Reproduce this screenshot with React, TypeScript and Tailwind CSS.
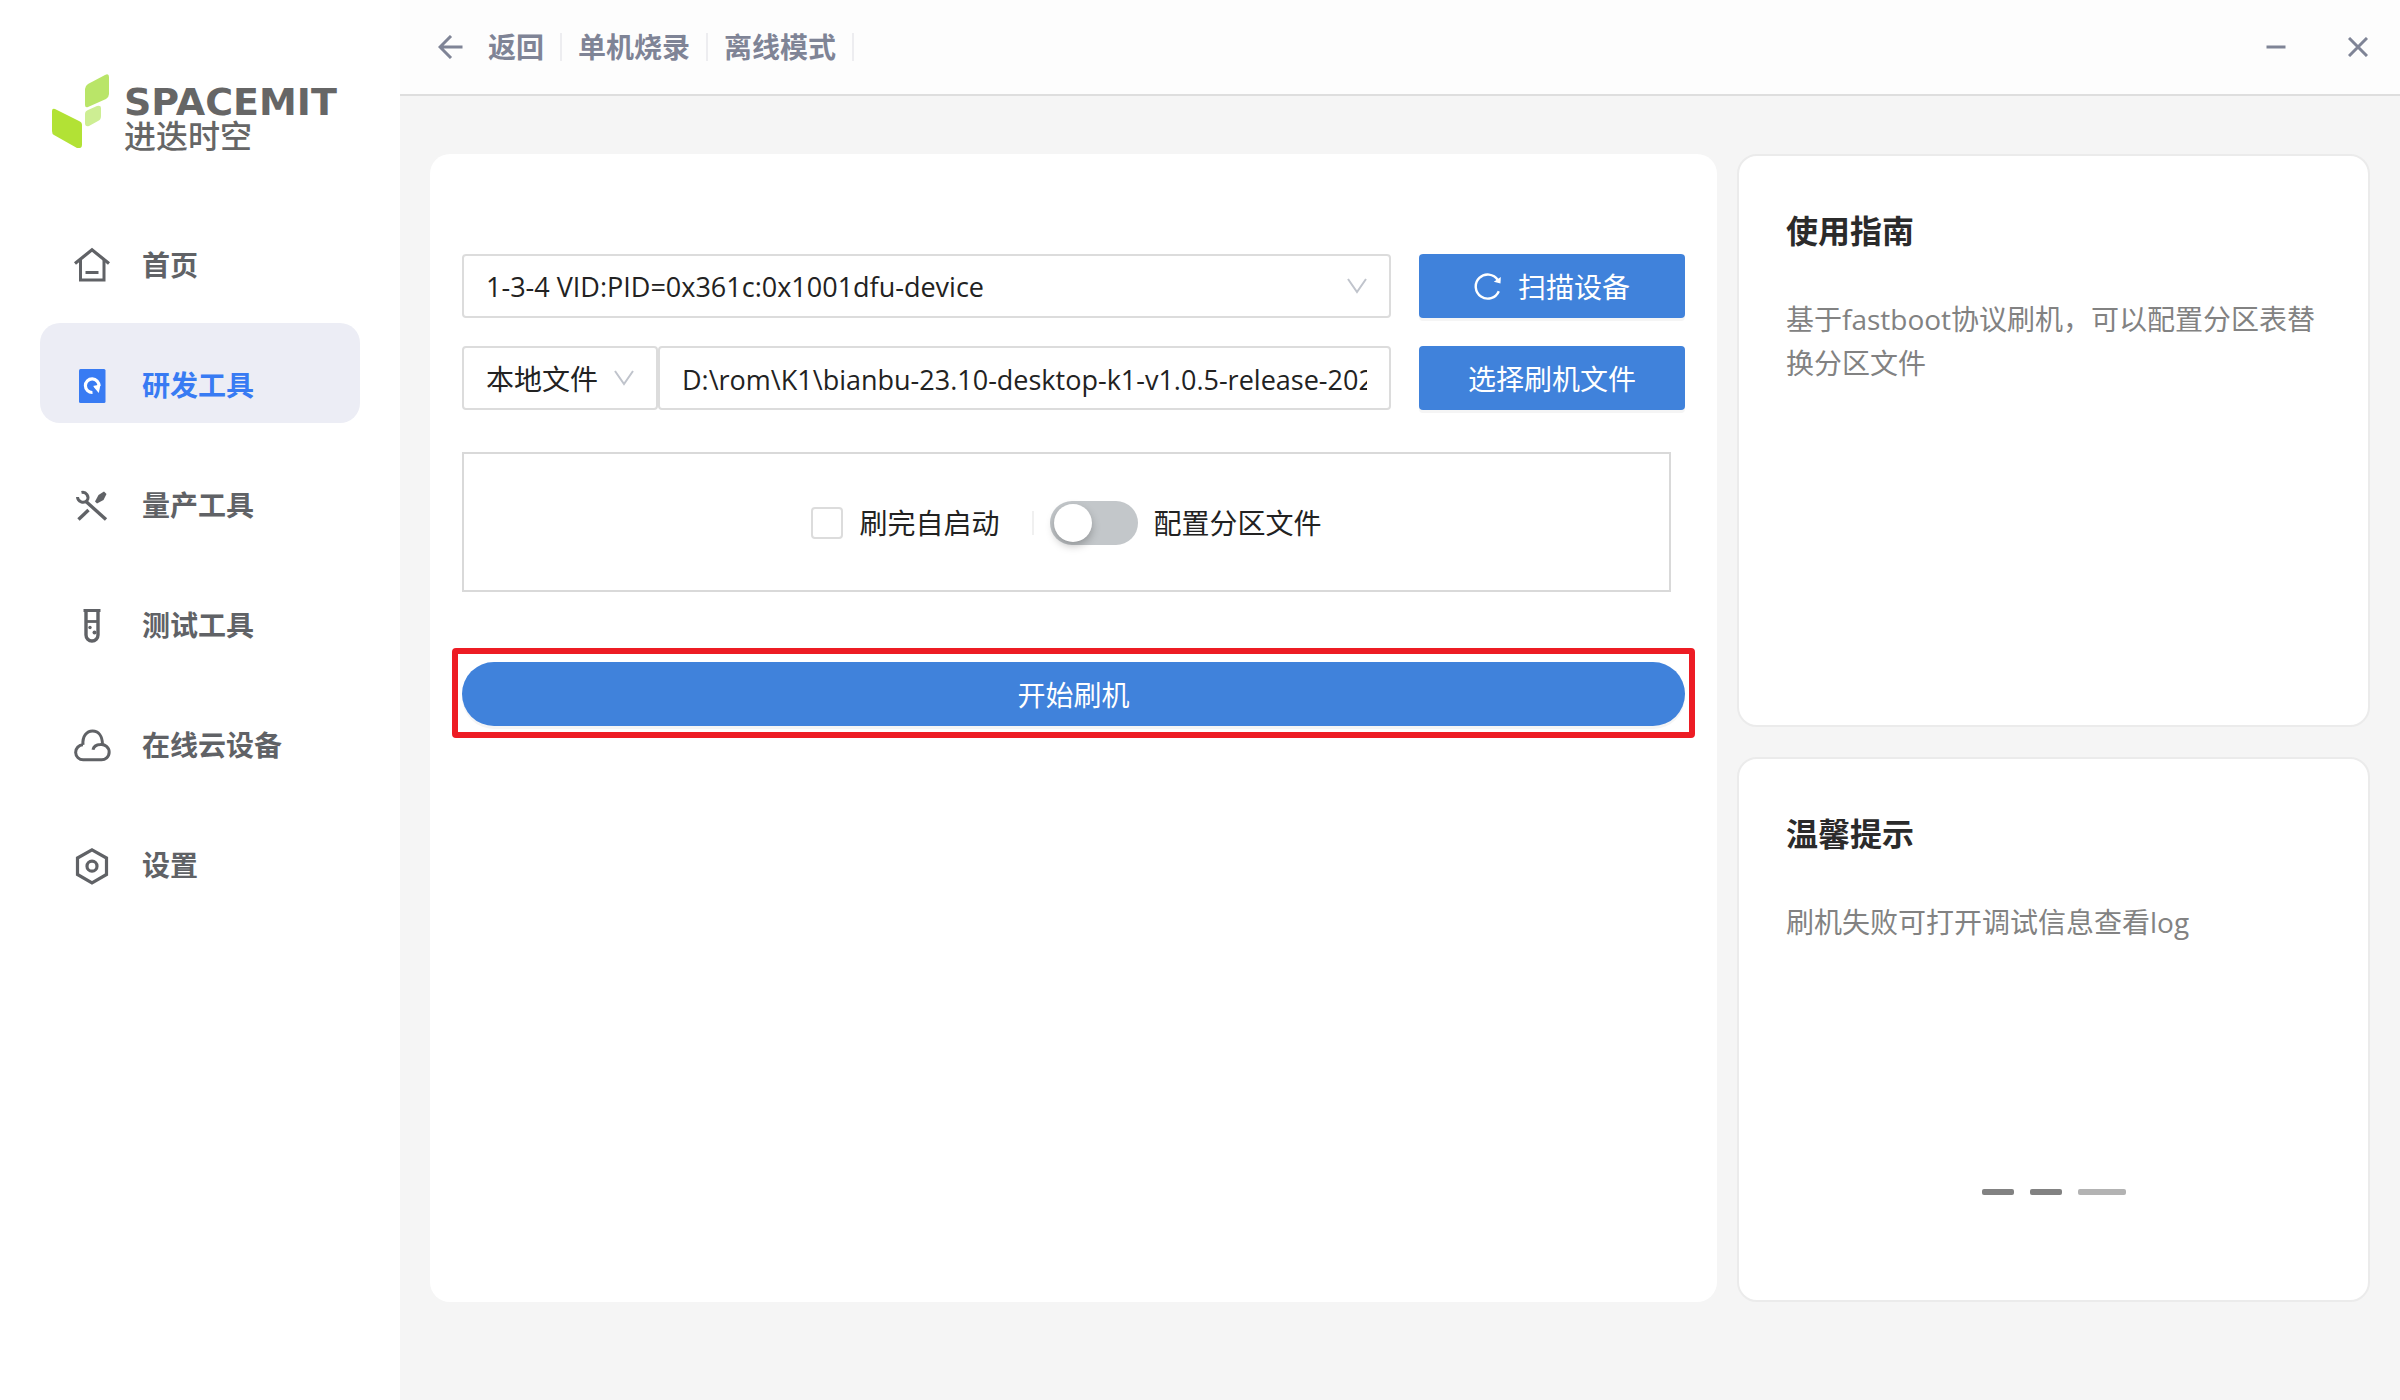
import { useState, type ReactNode } from 'react';

const Icon = ({ children }: { children: ReactNode }) => (
    <svg viewBox="0 0 40 40" className="size-10 shrink-0" fill="none" stroke="currentColor" strokeWidth="3" aria-hidden="true">
        {children}
    </svg>
);

const HomeIcon = () => (
    <Icon>
        <path d="M3 18.500 20 4.800 37 18.500" strokeWidth="3.200" />
        <path d="M8.500 15v20h23.500V15" />
        <path d="M13.500 27.500h13" />
    </Icon>
);

const DeviceIcon = () => (
    <Icon>
        <rect x="7" y="4" width="26.500" height="34" rx="1.500" fill="currentColor" stroke="none" />
        <path d="M20.500 27.500a6.800 6.800 0 1 1 6.500-6.500" stroke="#fff" strokeWidth="3.200" />
        <path d="m20.800 21 7.700-1.500-1.700 8.500z" fill="#fff" stroke="none" />
        <path d="m19.800 20.500 3.400 8.500" strokeWidth="2.200" />
    </Icon>
);

const ToolsIcon = () => (
    <Icon>
        <path d="m14 16.500 20 18" strokeWidth="3.400" />
        <path d="M9.500 7.500a5.200 5.200 0 0 1 5.500 8 5.500 5.500 0 0 1-9.500-3.500" strokeWidth="3" />
        <path d="m6.500 34.500 10-9.500" strokeWidth="3.400" />
        <path d="m23 16.500 3.500-6.500 5.500-3.500 2.500 2.500-3 6-6.500 3.500z" fill="currentColor" stroke="none" />
    </Icon>
);

const TubeIcon = () => (
    <Icon>
        <path d="M11.500 5.500h17" />
        <path d="M14 6v24a6 6 0 0 0 12 0V6" strokeWidth="3.400" />
        <path d="M14 16.500h12" strokeWidth="2.800" />
        <circle cx="18" cy="22.500" r="1.700" fill="currentColor" stroke="none" />
        <circle cx="22.500" cy="27.500" r="2" fill="currentColor" stroke="none" />
    </Icon>
);

const CloudIcon = () => (
    <Icon>
        <path d="M11 19.800a7.500 7.500 0 0 0 .3 15h17.400a7.700 7.700 0 1 0-.2-15.300c-4.500.2-7 2.500-7.500 5.300" />
        <path d="M11 19.800c-.8-8.500 3.800-13.800 9.500-13.800 6 0 9.900 5 10 13.500" />
    </Icon>
);

const SettingIcon = () => (
    <Icon>
        <path d="m20 4.800 14.500 8.200v16.500L20 37.800 5.500 29.500V13z" strokeWidth="3.200" />
        <circle cx="20" cy="21.200" r="5" strokeWidth="3.200" />
    </Icon>
);

const Chevron = () => (
    <svg viewBox="0 0 20 16" className="pointer-events-none absolute right-6 top-6 h-4 w-5" fill="none" stroke="#c0c4cc" strokeWidth="2" aria-hidden="true">
        <path d="m1 1 9 13 9-13" />
    </svg>
);

const navItems = [
    { label: '首页', icon: <HomeIcon /> },
    { label: '研发工具', icon: <DeviceIcon /> },
    { label: '量产工具', icon: <ToolsIcon /> },
    { label: '测试工具', icon: <TubeIcon /> },
    { label: '在线云设备', icon: <CloudIcon /> },
    { label: '设置', icon: <SettingIcon /> },
];

const crumbs = ['单机烧录', '离线模式'];

const Sidebar = () => {
    const [active, setActive] = useState('研发工具');

    return (
        <aside className="w-[400px] shrink-0 bg-white px-10 pt-[74px]">
            <div className="flex h-[74px] gap-3.5 pl-3">
                <svg viewBox="0 0 58 74" className="h-[74px] w-[58px] shrink-0" aria-hidden="true">
                    <path d="M3 35q-3-1-3 2v20q0 3 2 4l23 13q5 1 5-3V51q0-3-3-4z" fill="#b2e235" />
                    <path d="M33 15q0-3 3-5L53 1q4-2 4 2v17q0 3-3 5L36 33q-3 1-3-2z" fill="#b9e568" />
                    <path d="M33 40q0-3 3-4l9-4q4-1 4 2v8q0 4-3 5l-9 5q-4 1-4-3z" fill="#cdee93" />
                </svg>
                <div className="text-[#666666]">
                    <p className="mt-2 font-['DejaVu_Sans',sans-serif] text-[38px] font-bold leading-10">SPACEMIT</p>
                    <p className="text-[32px] font-medium leading-7">进迭时空</p>
                </div>
            </div>
            <nav className="mt-[55px] flex flex-col gap-5">
                {navItems.map((item) => (
                    <button
                        key={item.label}
                        onClick={() => setActive(item.label)}
                        className={`flex h-[100px] items-center gap-[30px] rounded-[20px] pl-8 pt-6 text-[28px] font-bold ${active === item.label ? 'bg-[#ecedf5] text-[#387bf3]' : 'text-[#606266]'
                            }`}
                    >
                        {item.icon}
                        {item.label}
                    </button>
                ))}
            </nav>
        </aside>
    );
};

const Header = () => (
    <header className="flex h-24 items-center border-b-2 border-[#dedede] bg-[#fdfdfd] pl-[38px] pr-8 text-[28px] font-bold text-[#7f8496]">
        <button className="flex items-center gap-6">
            <svg viewBox="0 0 26 24" className="h-6 w-[26px]" fill="none" stroke="currentColor" strokeWidth="3" aria-hidden="true">
                <path d="M13 1 2 12l11 11M2 12h22.500" />
            </svg>
            返回
        </button>
        {crumbs.map((crumb) => (
            <div key={crumb} className="flex items-center">
                <span className="mx-4 h-7 w-0.5 bg-[#ededf0]" />
                <span>{crumb}</span>
            </div>
        ))}
        <span className="ml-4 h-7 w-0.5 bg-[#ededf0]" />
        <div className="ml-auto flex items-center gap-[62px]">
            <button aria-label="最小化">
                <svg viewBox="0 0 20 20" className="size-5" fill="none" stroke="currentColor" strokeWidth="3">
                    <path d="M.5 10h19" />
                </svg>
            </button>
            <button aria-label="关闭">
                <svg viewBox="0 0 20 20" className="size-5" fill="none" stroke="currentColor" strokeWidth="3">
                    <path d="m1 1 18 18M19 1 1 19" />
                </svg>
            </button>
        </div>
    </header>
);

const FlashForm = () => {
    const [file, setFile] = useState('D:\\rom\\K1\\bianbu-23.10-desktop-k1-v1.0.5-release-202');
    const [autoStart, setAutoStart] = useState(false);
    const [partition, setPartition] = useState(false);

    return (
        <section className="rounded-[20px] bg-white px-8 pt-[100px] text-[28px] text-[#222222]">
            {/* Device */}
            <div className="flex gap-7">
                <div className="relative flex-1">
                    <select aria-label="设备" className="h-16 w-full appearance-none rounded-sm border-2 border-[#dcdcdc] bg-white px-[22px] pt-0.5 text-[27px]">
                        <option>1-3-4 VID:PID=0x361c:0x1001dfu-device</option>
                    </select>
                    <Chevron />
                </div>
                <button className="flex h-16 w-[266px] items-center justify-center gap-4 rounded-sm bg-[#4082db] pt-0.5 text-white shadow-[0_3px_0_#f5f5f5]">
                    <svg viewBox="0 0 28 28" className="size-7" fill="none" stroke="currentColor" strokeWidth="2.400" aria-hidden="true">
                        <path d="M24.800 18.200A12 12 0 1 1 23.800 7" />
                        <path d="m26.800 4-.3 6.600-6.700-1.800z" fill="currentColor" stroke="none" />
                    </svg>
                    扫描设备
                </button>
            </div>

            {/* Image file */}
            <div className="mt-7 flex gap-7">
                <div className="flex flex-1">
                    <div className="relative w-[196px]">
                        <select aria-label="文件来源" className="h-16 w-full appearance-none rounded-sm border-2 border-[#dcdcdc] bg-white px-[22px] pt-0.5">
                            <option>本地文件</option>
                        </select>
                        <Chevron />
                    </div>
                    <input
                        aria-label="刷机文件"
                        value={file}
                        onChange={(e) => setFile(e.target.value)}
                        className="h-16 min-w-0 flex-1 rounded-sm border-2 border-[#dcdcdc] px-[22px] pt-0.5 text-[27px]"
                    />
                </div>
                <button className="h-16 w-[266px] rounded-sm bg-[#4082db] pt-0.5 text-white shadow-[0_3px_0_#f5f5f5]">选择刷机文件</button>
            </div>

            {/* Options */}
            <div className="mr-3.5 mt-[42px] flex h-[140px] items-center justify-center border-2 border-[#d9d9d9] pt-0.5">
                <label className="flex items-center gap-4">
                    <input
                        type="checkbox"
                        checked={autoStart}
                        onChange={(e) => setAutoStart(e.target.checked)}
                        className="size-8 appearance-none rounded-sm border-2 border-[#dcdcdc] checked:border-[#4082db] checked:bg-[#4082db]"
                    />
                    刷完自启动
                </label>
                <span className="ml-8 mr-4 h-6 w-0.5 bg-[#f0f0f0]" />
                <label className="flex items-center gap-4">
                    <span className="relative flex">
                        <input
                            type="checkbox"
                            role="switch"
                            checked={partition}
                            onChange={(e) => setPartition(e.target.checked)}
                            className="peer h-11 w-[88px] appearance-none rounded-full bg-[#c3c7ca] checked:bg-[#4082db]"
                        />
                        <span className="pointer-events-none absolute left-1 top-[3px] size-[38px] rounded-full bg-white shadow-[0_4px_8px_#00000040] peer-checked:left-[46px]" />
                    </span>
                    配置分区文件
                </label>
            </div>

            {/* Start */}
            <div className="-mx-2.5 mt-14 rounded-sm border-[6px] border-[#ed1c24] px-1 pb-1.5 pt-2">
                <button className="h-16 w-full rounded-full bg-[#4082db] pt-0.5 text-white shadow-[0_3px_0_#f5f5f5]">开始刷机</button>
            </div>
        </section>
    );
};

const InfoCard = ({ title, text, children }: { title: string; text: string; children?: ReactNode }) => (
    <section className="flex flex-col rounded-[20px] border-2 border-[#ebebeb] bg-white px-[47px] pt-[51px]">
        <h2 className="text-[32px] font-bold leading-[48px] text-[#2b2b2b]">{title}</h2>
        <p className="mt-[42px] text-[28px] leading-[44px] text-[#828282]">{text}</p>
        {children}
    </section>
);

const App = () => {
    return (
        <div className="flex min-h-screen bg-[#f5f5f5] font-['Open_Sans','Noto_Sans_CJK_SC',sans-serif]">
            <Sidebar />
            <div className="flex flex-1 flex-col">
                <Header />
                <main className="grid flex-1 grid-cols-[429fr_211fr] gap-5 px-[30px] pb-[98px] pt-[58px]">
                    <FlashForm />
                    <div className="grid grid-rows-[21fr_20fr] gap-[30px]">
                        <InfoCard title="使用指南" text="基于fastboot协议刷机，可以配置分区表替换分区文件" />
                        <InfoCard title="温馨提示" text="刷机失败可打开调试信息查看log">
                            <div className="mb-[105px] mt-auto flex justify-center gap-4">
                                <span className="h-1.5 w-8 rounded-xs bg-[#828282]" />
                                <span className="h-1.5 w-8 rounded-xs bg-[#828282]" />
                                <span className="h-1.5 w-12 rounded-xs bg-[#b3b3b3]" />
                            </div>
                        </InfoCard>
                    </div>
                </main>
            </div>
        </div>
    );
};

export default App;
